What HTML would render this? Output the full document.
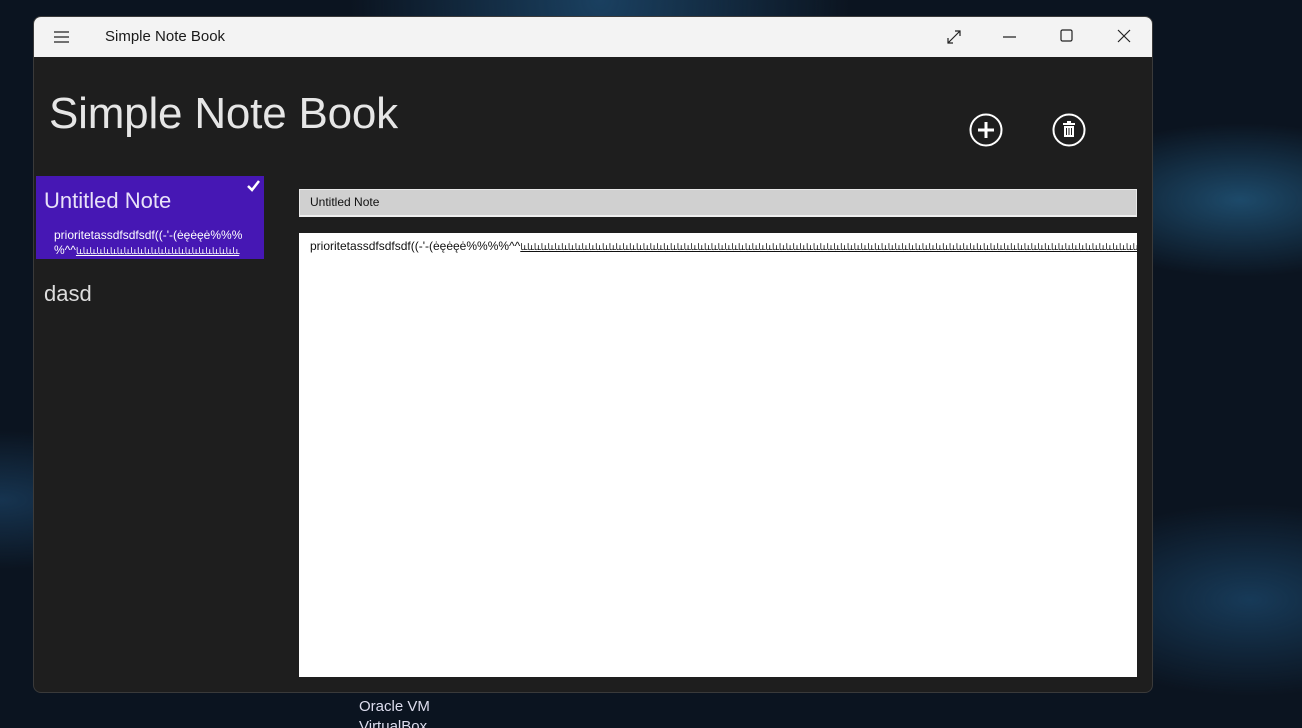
<!DOCTYPE html>
<html><head><meta charset="utf-8"><style>
*{margin:0;padding:0;box-sizing:border-box}
html,body{width:1302px;height:728px;overflow:hidden}
body{position:relative;font-family:"Segoe UI","Liberation Sans",sans-serif;
background:radial-gradient(ellipse at 1240px 200px,#1d4a6a 0,transparent 180px),radial-gradient(ellipse at 1250px 600px,#173a58 0,transparent 200px),radial-gradient(ellipse at 0px 500px,#163450 0,transparent 180px),radial-gradient(ellipse at 600px 0px,#1a4060 0,transparent 250px),#0b1420}
.win{position:absolute;left:33px;top:16px;width:1120px;height:677px;background:#1e1e1e;border-radius:8px;overflow:hidden;border:1px solid #3a3a3a}
.tb{position:absolute;left:0;top:0;width:100%;height:40px;background:#f3f3f3;color:#1a1a1a;font-size:15px}
.abs{position:absolute}
.oracle{position:absolute;left:359px;top:697px;color:#dde;font-size:15px;line-height:20px}
.sq{font-size:9px;letter-spacing:-0.5px}
</style></head><body>
<div class="win">
 <div class="tb">
  <svg class="abs" style="left:20px;top:13px" width="16" height="14"><path d="M0 2H15M0 7H15M0 12H15" stroke="#222" stroke-width="1.3"/></svg>
  <div class="abs" style="left:71px;top:11px">Simple Note Book</div>
  <svg class="abs" style="left:912px;top:12px" width="16" height="16"><path d="M2 14L14 2M9 2H14V7M2 9V14H7" stroke="#222" stroke-width="1.2" fill="none"/></svg>
  <svg class="abs" style="left:969px;top:19px" width="14" height="2"><path d="M0 1H13" stroke="#222" stroke-width="1.2"/></svg>
  <svg class="abs" style="left:1026px;top:12px" width="14" height="14"><rect x="1" y="1" width="11" height="11" rx="1.5" stroke="#222" stroke-width="1.2" fill="none"/></svg>
  <svg class="abs" style="left:1083px;top:12px" width="14" height="14"><path d="M1 1L13 13M13 1L1 13" stroke="#222" stroke-width="1.2"/></svg>
 </div>
 <div class="abs" style="left:15px;top:72px;color:#e6e6e6;font-size:44px;letter-spacing:-0.2px">Simple Note Book</div>
 <svg class="abs" style="left:935px;top:96px" width="34" height="34"><circle cx="17" cy="17" r="15.5" stroke="#fff" stroke-width="2" fill="none"/><path d="M17 9V25M9 17H25" stroke="#fff" stroke-width="3"/></svg>
 <svg class="abs" style="left:1018px;top:96px" width="34" height="34"><circle cx="17" cy="17" r="15.5" stroke="#fff" stroke-width="2" fill="none"/><rect x="11" y="10" width="12" height="2" fill="#fff"/><rect x="15" y="8" width="4" height="2" fill="#fff"/><rect x="12" y="13" width="10" height="11" fill="#fff"/><path d="M14.5 15V22M17 15V22M19.5 15V22" stroke="#1e1e1e" stroke-width="1"/></svg>
 <div class="abs" style="left:2px;top:159px;width:228px;height:83px;background:#4617b4"></div>
 <svg class="abs" style="left:212px;top:162px" width="16" height="14"><path d="M2 7L6 11L13 2" stroke="#fff" stroke-width="2.5" fill="none"/></svg>
 <div class="abs" style="left:10px;top:171px;color:#e8e2f8;font-size:22px">Untitled Note</div>
 <div class="abs" style="left:20px;top:211px;color:#fff;font-size:12px;line-height:15px;width:200px;overflow:hidden;white-space:nowrap">prioritetassdfsdfsdf((-'-(ėęėęė%%%<br>%^^<u class="sq">ևևևևևևևևևևևևևևևևևևևևևևևև</u></div>
 <div class="abs" style="left:10px;top:264px;color:#ddd;font-size:22px">dasd</div>
 <div class="abs" style="left:265px;top:172px;width:838px;height:28px;background:#d0d0d0;border:1px solid #e8e8e8;border-bottom:2px solid #eee;font-size:12px;color:#111;padding:5px 10px">Untitled Note</div>
 <div class="abs" style="left:265px;top:216px;width:838px;height:444px;background:#fff;font-size:12px;color:#111;padding:6px 11px;white-space:nowrap;overflow:hidden">prioritetassdfsdfsdf((-'-(ėęėęė%%%%^^<u class="sq">ևևևևևևևևևևևևևևևևևևևևևևևևևևևևևևևևևևևևևևևևևևևևևևևևևևևևևևևևևևևևևևևևևևևևևևևևևևևևևևևևևևևևևևևևևևևև</u></div>
</div>
<div class="oracle">Oracle VM<br>VirtualBox</div>
</body></html>
